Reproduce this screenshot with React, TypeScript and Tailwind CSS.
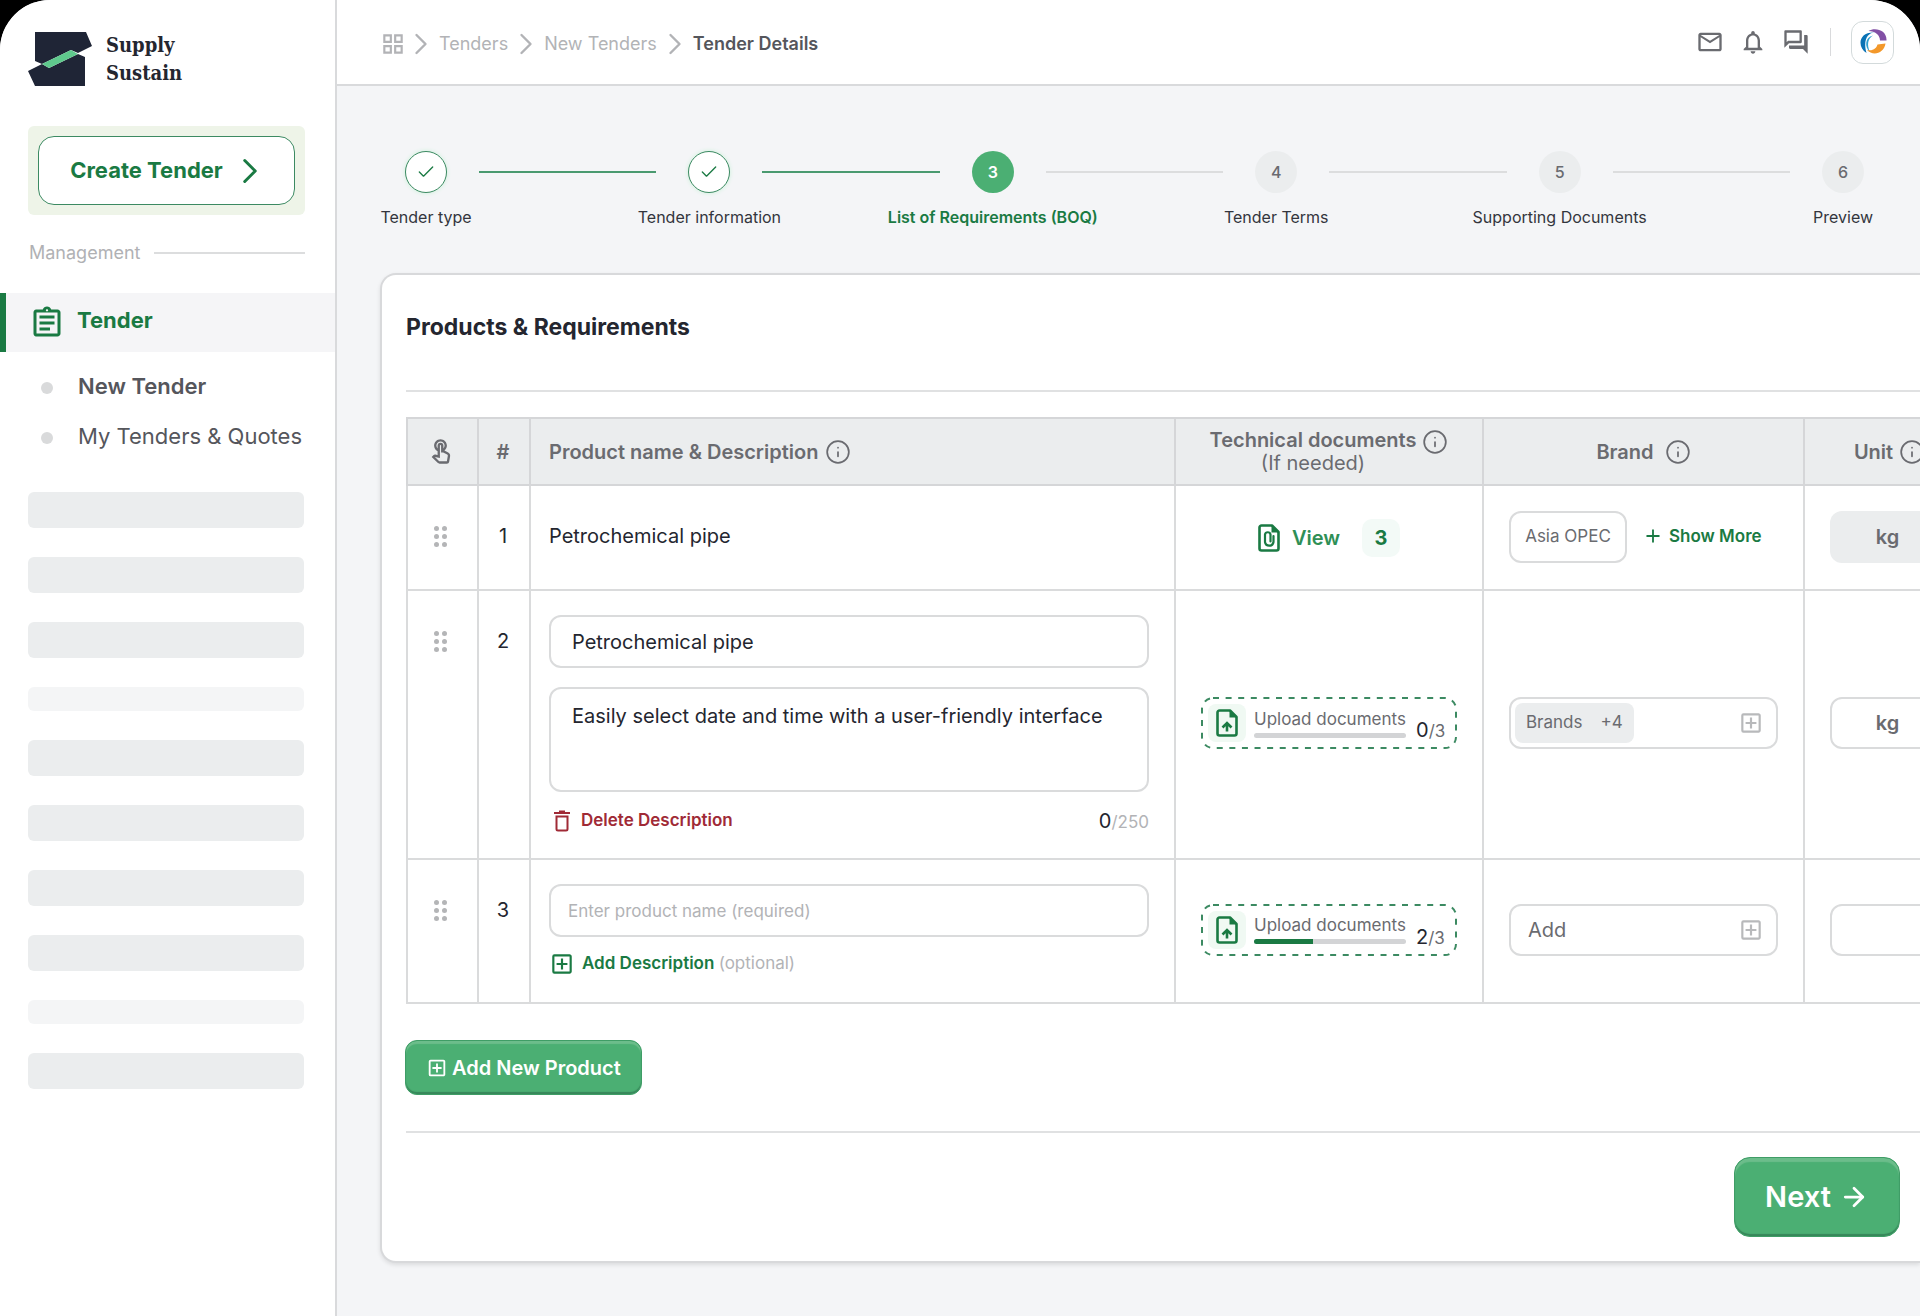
import type { ReactNode } from "react";
import { ArrowRight, Check, ChevronRight, Info, Plus } from "lucide-react";
import {
  MdMailOutline,
  MdNotificationsNone,
  MdOutlineAddBox,
  MdOutlineAssignment,
  MdOutlineForum,
  MdOutlineGridView,
  MdOutlineTouchApp,
} from "react-icons/md";

const steps = [
  { label: "Tender type", state: "done" },
  { label: "Tender information", state: "done" },
  { label: "List of Requirements (BOQ)", state: "current" },
  { label: "Tender Terms", state: "next" },
  { label: "Supporting Documents", state: "next" },
  { label: "Preview", state: "next" },
];

const placeholders = [
  "h-9 bg-[#ebedee]",
  "h-9 bg-[#ebedee]",
  "h-9 bg-[#ebedee]",
  "h-6 bg-[#f4f5f6]",
  "h-9 bg-[#ebedee]",
  "h-9 bg-[#ebedee]",
  "h-9 bg-[#ebedee]",
  "h-9 bg-[#ebedee]",
  "h-6 bg-[#f4f5f6]",
  "h-9 bg-[#ebedee]",
];

function Logo() {
  return (
    <svg viewBox="0 0 64 54" className="h-[54px] w-16" aria-hidden="true">
      <path d="M7 0H58L64 14L50 21L43 18L14 32L7 29Z" fill="#1f2536" />
      <path d="M0 39L14 32L21 36L50 22L57 25V54H7Z" fill="#1f2536" />
      <path d="M14 32L43 18L50 22L21 36Z" fill="#5fc98d" />
    </svg>
  );
}

function CompanyMark() {
  return (
    <svg viewBox="0 0 28 28" className="size-7" aria-hidden="true">
      <path d="M9.500 3C16 -1 28 2 27.500 12.500L21 12.500C21 7 16 3 9.500 3Z" fill="#8250a5" />
      <path d="M16 4.500C8 4.500 4 13 7.500 25C-2 19 -1 3.500 16 4.500Z" fill="#0a72b5" />
      <path d="M14 7.500C9 10 7.500 17 11 24C5 19 6 9 14 7.500Z" fill="#2e9fd0" />
      <path d="M26.500 15.500C25 25.500 14 28.500 8 22C14 23.500 17.500 20 18.500 16.500Z" fill="#f3982a" />
    </svg>
  );
}

function FileIcon({ kind }: { kind: "clip" | "upload" }) {
  return (
    <svg
      viewBox="0 0 22 28"
      className="h-7 w-[22px] shrink-0"
      fill="none"
      stroke="currentColor"
      strokeWidth="2.600"
      aria-hidden="true"
    >
      <path d="M14 1.500H3.500A2 2 0 0 0 1.500 3.500V24.500A2 2 0 0 0 3.500 26.500H18.500A2 2 0 0 0 20.500 24.500V8Z" strokeLinejoin="round" />
      <path d="M13.500 1.500V8.500H20.500Z" fill="currentColor" stroke="none" />
      {kind === "upload" ? (
        <path d="M11 22.500V15M6.500 18.500L11 14L15.500 18.500" />
      ) : (
        <path d="M15.500 12V18A4.300 4.300 0 0 1 7 18V10.500A2.800 2.800 0 0 1 12.500 10.500V17.500" strokeWidth="2.200" strokeLinecap="round" />
      )}
    </svg>
  );
}

function TrashIcon() {
  return (
    <svg viewBox="0 0 18 22" className="h-[22px] w-[18px]" fill="none" stroke="currentColor" strokeWidth="2" aria-hidden="true">
      <path d="M1 3H17M6 1.500H12" />
      <path d="M3.500 6.500H14.500V19A1.500 1.500 0 0 1 13 20.500H5A1.500 1.500 0 0 1 3.500 19Z" />
    </svg>
  );
}

function DragHandle() {
  return (
    <button type="button" aria-label="Reorder row" className="mx-auto grid w-fit grid-cols-2 gap-[3px]">
      {[0, 1, 2, 3, 4, 5].map((dot) => (
        <span key={dot} className="size-[5px] rounded-full bg-[#b4b5b7]" />
      ))}
    </button>
  );
}

function InfoButton({ label }: { label: string }) {
  return (
    <button type="button" aria-label={label} className="shrink-0">
      <Info className="size-[26px]" strokeWidth={1.6} />
    </button>
  );
}

function UploadBox({ count, progress }: { count: number; progress: number }) {
  return (
    <button
      type="button"
      className="relative mx-auto flex h-[52px] w-64 items-center pl-[7px] text-left"
    >
      <svg className="absolute inset-0 size-full" aria-hidden="true">
        <rect x="1" y="1" width="254" height="50" rx="11" fill="none" stroke="#3c8a62" strokeWidth="2" strokeDasharray="6 6.600" />
      </svg>
      <span className="flex h-[38px] w-[38px] items-center justify-center rounded-lg bg-[#f0f9f3] text-[#1a7a43]">
        <FileIcon kind="upload" />
      </span>
      <span className="ml-2 block w-[152px]">
        <span className="block text-[17px] leading-5 whitespace-nowrap text-[#6a6b70]">Upload documents</span>
        <span className="mt-1 block h-[5px] overflow-hidden rounded-full bg-[#d3d4d6]">
          <span className="block h-full bg-[#1a7a43]" style={{ width: `${progress}%` }} />
        </span>
      </span>
      <span className="ml-[10px] pt-[14px] text-[17px] leading-6 text-[#6a6b70]">
        <span className="text-xl text-[#24262f]">{count}</span>/3
      </span>
    </button>
  );
}

function Row({ index, first, children }: { index: number; first?: boolean; children: ReactNode }) {
  return (
    <>
      <td className={first ? "pr-1 pb-[2px] align-middle" : "pt-10 pr-1 align-top"}>
        <DragHandle />
      </td>
      <td className={first ? "pr-[2px] pb-[3px] text-center align-middle" : "pt-9 pr-[2px] text-center align-top"}>{index}</td>
      {children}
    </>
  );
}

function Sidebar() {
  return (
    <aside className="w-[337px] shrink-0 border-r-2 border-[#d9dadc] bg-white">
      <a href="#" className="flex items-center gap-[14px] pt-[31px] pl-7">
        <Logo />
        <span className="font-['Roboto_Slab','DejaVu_Serif_Condensed','DejaVu_Serif',serif] text-xl leading-7 font-bold text-[#24262f]">
          Supply
          <br />
          Sustain
        </span>
      </a>

      <div className="mt-[39px] mr-[30px] ml-7 rounded-md bg-[#eef4e8] p-[10px]">
        <button
          type="button"
          className="flex h-[69px] w-full items-center justify-center gap-[6px] rounded-2xl border border-[#3c8a62] bg-white text-[22px] font-bold text-[#1a7a43]"
        >
          Create Tender
          <ChevronRight className="size-[42px] -mr-2" strokeWidth={1.7} />
        </button>
      </div>

      <div className="mt-6 mr-[30px] ml-[29px] flex items-center gap-[14px]">
        <span className="text-lg leading-7 text-[#b0b1b4]">Management</span>
        <span className="h-[2px] flex-1 bg-[#dcddde]" />
      </div>

      <nav aria-label="Management">
        <a
          href="#"
          className="mt-[26px] flex h-[59px] items-center border-l-6 border-[#1a7a43] bg-[#f5f5f7] pl-[23px] text-[22px] font-bold text-[#1a7a43]"
        >
          <MdOutlineAssignment className="mr-3 size-9" />
          <span className="pb-1">Tender</span>
        </a>
        <ul className="mt-[9px] pl-[41px] text-[22px] leading-[50px] text-[#55565c]">
          <li>
            <a href="#" className="flex items-center gap-[25px] font-semibold">
              <span className="mt-1 size-3 rounded-full bg-[#d9dadb]" />
              New Tender
            </a>
          </li>
          <li>
            <a href="#" className="flex items-center gap-[25px] whitespace-nowrap">
              <span className="mt-1 size-3 rounded-full bg-[#d9dadb]" />
              My Tenders &amp; Quotes
            </a>
          </li>
        </ul>
      </nav>

      <div className="mt-[31px] mr-[31px] ml-7 flex flex-col gap-[29px]">
        {placeholders.map((style, i) => (
          <div key={i} className={`rounded-md ${style}`} />
        ))}
      </div>
    </aside>
  );
}

function Header() {
  return (
    <header className="flex h-[86px] items-center justify-between border-b-2 border-[#d9dadc] bg-white pr-[26px] pl-[43px]">
      <nav aria-label="Breadcrumb" className="flex items-center pt-1 text-lg text-[#b2b3b6]">
        <a href="#" aria-label="Dashboard" className="-mr-[3px]">
          <MdOutlineGridView className="size-[26px]" />
        </a>
        <ChevronRight className="size-9" strokeWidth={1.6} />
        <a href="#">Tenders</a>
        <ChevronRight className="size-9" strokeWidth={1.6} />
        <a href="#">New Tenders</a>
        <ChevronRight className="size-9" strokeWidth={1.6} />
        <a href="#" aria-current="page" className="font-semibold text-[#55565c]">
          Tender Details
        </a>
      </nav>
      <div className="flex items-center text-[#6a6b70]">
        <button type="button" aria-label="Mail">
          <MdMailOutline className="size-7" />
        </button>
        <button type="button" aria-label="Notifications" className="ml-[15px]">
          <MdNotificationsNone className="size-7" />
        </button>
        <button type="button" aria-label="Messages" className="ml-[15px]">
          <MdOutlineForum className="size-7" />
        </button>
        <span className="ml-5 h-7 w-px bg-[#d9dadc]" />
        <button
          type="button"
          aria-label="Company"
          className="ml-5 flex size-[43px] items-center justify-center rounded-xl border border-[#d3dadb] bg-white"
        >
          <CompanyMark />
        </button>
      </div>
    </header>
  );
}

function Stepper() {
  return (
    <ol className="flex pt-[65px] pr-6 pl-9">
      {steps.map((step, i) => (
        <li key={step.label} className={i === 0 ? "flex" : "flex flex-1"}>
          {i > 0 && (
            <span
              className={
                step.state === "next"
                  ? "mt-5 h-[2px] flex-1 bg-[#dcddde]"
                  : "mt-5 h-[2px] flex-1 bg-[#4a9a70]"
              }
            />
          )}
          <div className="flex w-[106px] flex-col items-center">
            {step.state === "done" && (
              <span className="flex size-[42px] items-center justify-center rounded-full border border-[#3c8a62] bg-white text-[#1a7a43] shadow-[0_0_4px_#c9f0d8]">
                <Check className="size-5" strokeWidth={1.6} />
              </span>
            )}
            {step.state === "current" && (
              <span className="flex size-[42px] items-center justify-center rounded-full bg-[#4baf73] text-base font-semibold text-white">
                {i + 1}
              </span>
            )}
            {step.state === "next" && (
              <span className="flex size-[42px] items-center justify-center rounded-full bg-[#ebedee] text-base font-medium text-[#6a6b70]">
                {i + 1}
              </span>
            )}
            <span
              className={
                step.state === "current"
                  ? "mt-3 text-base leading-6 font-semibold whitespace-nowrap text-[#1a7a43]"
                  : "mt-3 text-base leading-6 whitespace-nowrap text-[#33353d]"
              }
            >
              {step.label}
            </span>
          </div>
        </li>
      ))}
    </ol>
  );
}

function ProductsTable() {
  return (
    <div className="mt-[25px] overflow-hidden">
      <table className="w-[1566px] table-fixed border-collapse text-xl text-[#24262f] [&_td]:border-2 [&_td]:border-[#dadbdc] [&_th]:border-2 [&_th]:border-[#d5d6d8]">
        <colgroup>
          <col className="w-[71px]" />
          <col className="w-[52px]" />
          <col className="w-[645px]" />
          <col className="w-[308px]" />
          <col className="w-[321px]" />
          <col />
        </colgroup>
        <thead className="bg-[#ebedee] text-[#6a6b70]">
          <tr className="h-[67px]">
            <th scope="col" aria-label="Reorder" className="pr-1">
              <MdOutlineTouchApp className="mx-auto size-7" />
            </th>
            <th scope="col" className="pr-[2px] font-semibold">#</th>
            <th scope="col" className="pl-[18px] font-semibold">
              <div className="flex items-center gap-[7px]">
                Product name &amp; Description
                <InfoButton label="About product name" />
              </div>
            </th>
            <th scope="col" className="leading-[23px] font-semibold">
              <div className="flex items-start justify-center gap-[6px]">
                <div>
                  Technical documents
                  <div className="font-normal">(If needed)</div>
                </div>
                <InfoButton label="About technical documents" />
              </div>
            </th>
            <th scope="col" className="font-semibold">
              <div className="flex items-center justify-center gap-[11px]">
                Brand
                <InfoButton label="About brand" />
              </div>
            </th>
            <th scope="col" className="pl-1 font-semibold">
              <div className="flex items-center justify-center gap-[6px]">
                Unit
                <InfoButton label="About unit" />
              </div>
            </th>
          </tr>
        </thead>
        <tbody>
          <tr className="h-[105px]">
            <Row index={1} first>
              <td className="pb-[3px] pl-[18px]">Petrochemical pipe</td>
              <td>
                <div className="flex items-center justify-center text-[#1a7a43]">
                  <FileIcon kind="clip" />
                  <button type="button" className="ml-3 font-semibold text-[#2f8f56]">
                    View
                  </button>
                  <span className="ml-[22px] flex size-[38px] items-center justify-center rounded-[10px] bg-[#f3faf7] font-bold">
                    3
                  </span>
                </div>
              </td>
              <td className="pb-[2px] pl-[25px]">
                <div className="flex items-center text-[17px]">
                  <span className="flex h-[52px] w-[118px] items-center justify-center rounded-xl border-2 border-[#dadbdc] text-[#6a6b70]">
                    Asia OPEC
                  </span>
                  <button type="button" className="ml-4 flex items-center gap-[6px] font-semibold text-[#1a7a43]">
                    <Plus className="size-5" strokeWidth={2.2} />
                    Show More
                  </button>
                </div>
              </td>
              <td className="px-[25px] pb-[2px]">
                <div className="flex h-[52px] items-center justify-center rounded-xl bg-[#ebedee] font-semibold text-[#6a6b70]">kg</div>
              </td>
            </Row>
          </tr>

          <tr className="h-[269px]">
            <Row index={2}>
              <td className="pt-6 pr-[25px] pl-[18px] align-top">
                <input
                  aria-label="Product name"
                  defaultValue="Petrochemical pipe"
                  className="block h-[53px] w-full rounded-xl border-2 border-[#dadbdc] px-[21px]"
                />
                <textarea
                  aria-label="Product description"
                  defaultValue="Easily select date and time with a user-friendly interface"
                  className="mt-[19px] block h-[105px] w-full resize-none rounded-xl border-2 border-[#dadbdc] px-[21px] py-[13px] leading-7"
                />
                <div className="mt-[15px] flex items-center justify-between">
                  <button type="button" className="ml-1 flex h-6 items-center gap-[10px] text-[17px] font-semibold text-[#a02a36]">
                    <TrashIcon />
                    Delete Description
                  </button>
                  <span className="text-[17px] leading-6 text-[#b2b3b6]">
                    <span className="text-xl text-[#24262f]">0</span>/250
                  </span>
                </div>
              </td>
              <td className="pb-[3px]">
                <UploadBox count={0} progress={0} />
              </td>
              <td className="px-[25px] pb-[3px]">
                <div className="flex h-[52px] items-center justify-between rounded-xl border-2 border-[#dadbdc] pr-3 pl-1">
                  <span className="flex h-10 items-center gap-[18px] rounded-lg bg-[#ebedee] px-[11px] text-[17px] text-[#6a6b70]">
                    <span>Brands</span>
                    <span>+4</span>
                  </span>
                  <button type="button" aria-label="Add brand" className="text-[#b8b9bb]">
                    <MdOutlineAddBox className="size-[26px]" />
                  </button>
                </div>
              </td>
              <td className="px-[25px] pb-[3px]">
                <input
                  aria-label="Unit"
                  defaultValue="kg"
                  className="block h-[52px] w-full rounded-xl border-2 border-[#dadbdc] text-center font-semibold text-[#6a6b70]"
                />
              </td>
            </Row>
          </tr>

          <tr className="h-[144px]">
            <Row index={3}>
              <td className="pt-6 pr-[25px] pl-[18px] align-top">
                <input
                  aria-label="Product name"
                  placeholder="Enter product name (required)"
                  className="block h-[53px] w-full rounded-xl border-2 border-[#dadbdc] px-[17px] text-[17px] placeholder:text-[#b2b3b6]"
                />
                <button type="button" className="mt-[15px] flex h-6 items-center gap-[7px] text-[17px] font-semibold text-[#1a7a43]">
                  <MdOutlineAddBox className="size-[26px]" />
                  <span>
                    Add Description <span className="font-normal text-[#b2b3b6]">(optional)</span>
                  </span>
                </button>
              </td>
              <td className="pb-[3px]">
                <UploadBox count={2} progress={39} />
              </td>
              <td className="px-[25px] pb-[3px]">
                <div className="flex h-[52px] items-center rounded-xl border-2 border-[#dadbdc] pr-3 pl-[17px]">
                  <input
                    aria-label="Brand"
                    placeholder="Add"
                    className="min-w-0 flex-1 outline-none placeholder:text-[#6a6b70]"
                  />
                  <button type="button" aria-label="Add brand" className="text-[#b8b9bb]">
                    <MdOutlineAddBox className="size-[26px]" />
                  </button>
                </div>
              </td>
              <td className="px-[25px] pb-[3px]">
                <input aria-label="Unit" className="block h-[52px] w-full rounded-xl border-2 border-[#dadbdc] text-center" />
              </td>
            </Row>
          </tr>
        </tbody>
      </table>
    </div>
  );
}

export default function App() {
  return (
    <div className="min-h-screen bg-black font-['Inter','Liberation_Sans',sans-serif]">
      <div className="flex min-h-screen overflow-hidden rounded-t-[50px] bg-[#f4f5f7]">
        <Sidebar />
        <div className="min-w-0 flex-1">
          <Header />
          <Stepper />

          <main className="mt-11 ml-[43px] rounded-l-2xl border-2 border-r-0 border-[#d8d9db] bg-white pb-6 pl-6 shadow-[0_2px_4px_#0000001a]">
            <h1 className="pt-8 text-[23px] leading-10 font-bold text-[#24262f]">Products &amp; Requirements</h1>
            <hr className="mt-[43px] border-t-2 border-[#e0e1e2]" />

            <ProductsTable />

            <button
              type="button"
              className="mt-9 -ml-px flex h-[55px] items-center gap-1 rounded-xl border border-[#3f9d66] bg-[#4baf73] px-5 text-xl font-semibold text-white shadow-[inset_0_3px_1px_#6cbd8b,inset_0_-2px_1px_#37875a]"
            >
              <MdOutlineAddBox className="size-[22px]" />
              Add New Product
            </button>

            <hr className="mt-9 border-t-2 border-[#e0e1e2]" />

            <div className="mt-6 flex justify-end pr-5">
              <button
                type="button"
                className="flex h-20 w-[166px] items-center justify-center gap-2 rounded-2xl border border-[#3f9d66] bg-[#4baf73] text-[29px] font-semibold text-white shadow-[inset_0_4px_1px_#6cbd8b,inset_0_-2px_1px_#37875a]"
              >
                Next
                <ArrowRight className="size-[30px]" strokeWidth={2.2} />
              </button>
            </div>
          </main>
        </div>
      </div>
    </div>
  );
}
